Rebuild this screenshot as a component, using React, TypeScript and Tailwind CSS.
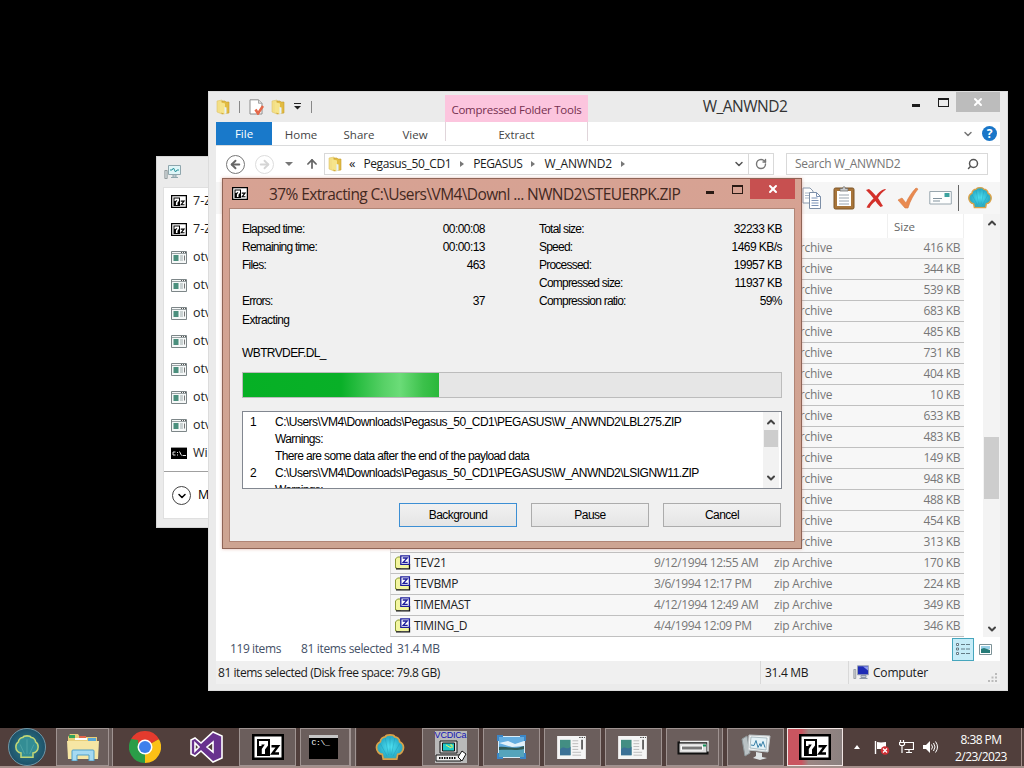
import React from 'react';
import { ArrowLeft, ArrowRight, ArrowUp, ChevronDown, ChevronUp, RotateCw, Search, X } from 'lucide-react';

interface FileRow {
  name?: string;
  date?: string;
  size: string;
}

const files: FileRow[] = [
  { size: '416 KB' },
  { size: '344 KB' },
  { size: '539 KB' },
  { size: '683 KB' },
  { size: '485 KB' },
  { size: '731 KB' },
  { size: '404 KB' },
  { size: '10 KB' },
  { size: '633 KB' },
  { size: '483 KB' },
  { size: '149 KB' },
  { size: '948 KB' },
  { size: '488 KB' },
  { size: '454 KB' },
  { size: '313 KB' },
  { name: 'TEV21', date: '9/12/1994 12:55 AM', size: '170 KB' },
  { name: 'TEVBMP', date: '3/6/1994 12:17 PM', size: '224 KB' },
  { name: 'TIMEMAST', date: '4/12/1994 12:49 AM', size: '349 KB' },
  { name: 'TIMING_D', date: '4/4/1994 12:09 PM', size: '346 KB' },
];

const processes = ['7-Zip', '7-Zip', 'otvdm', 'otvdm', 'otvdm', 'otvdm', 'otvdm', 'otvdm', 'otvdm', 'Windows'];

/* ---------- Icons ---------- */

const SevenZipIcon = ({ className }: { className: string }) => (
  <svg className={className} viewBox="0 0 32 26">
    <path d="M0 0h32v26H0z" fill="#000" />
    <path d="M2.500 2.500h27v21h-27z" fill="#fff" />
    <path d="M5 5h13v17H5z" fill="#000" />
    <path d="M7 7h9v4.500l-3 4V20h-3.200v-5l3-4.500H9.500V12H7z" fill="#fff" />
    <path d="M19.500 12.200h6.500l-5.500 7.300h6.500" fill="none" stroke="#000" strokeWidth="2.400" />
  </svg>
);

const AppWindowIcon = () => (
  <svg className="h-[13px] w-4 shrink-0" viewBox="0 0 16 13">
    <path d="M.5.5h15v12H.5z" fill="#f6f8f8" stroke="#7d8688" />
    <path d="M1 2.500h14" stroke="#9aa3a5" />
    <path d="M10 1.500h1m1 0h1m1 0h1" stroke="#555" />
    <path d="M2.500 4h5v6h-5z" fill="#4b8f7d" />
    <path d="M9 5h3M9 7h3M9 9h3" stroke="#8c9a9a" strokeWidth=".8" />
    <path d="M13.500 4.500v5" stroke="#555" strokeWidth=".8" />
  </svg>
);

const ConsoleIcon = () => (
  <svg className="h-3 w-4 shrink-0" viewBox="0 0 16 12">
    <path d="M0 0h16v12H0z" fill="#000" />
    <path d="M0 .5h16" stroke="#999" />
    <path d="M4.500 5H2v3h2.500M6 5.500h1M6 8h1M8.500 4.500l2 4M11.500 8.500H15" stroke="#fff" fill="none" strokeWidth=".9" />
  </svg>
);

const FolderIcon = () => (
  <svg className="h-4 w-[15px] shrink-0" viewBox="0 0 15 16">
    <path d="M1 2l5-1v14l-5-2z" fill="#f3df86" stroke="#dfc468" strokeWidth=".6" />
    <path d="M6 2h3l1 1h3v11l-7 1z" fill="#e2bb42" stroke="#c79f30" strokeWidth=".6" />
    <path d="M4 3l5 1.500V15l-5-2z" fill="#f6e48b" />
    <path d="M8.500 8l2 .5v6l-2 .5z" fill="#e6f2fa" />
  </svg>
);

const PropertiesIcon = () => (
  <svg className="h-4 w-[15px]" viewBox="0 0 15 16">
    <path d="M1 .8h8.500L13 4.300V15H1z" fill="#fff" stroke="#8b8b8b" />
    <path d="M9.500.8v3.500H13" fill="#ddd" stroke="#8b8b8b" strokeWidth=".7" />
    <path d="M6.500 10.500l2.500 4 5-7.500" fill="none" stroke="#e5694a" strokeWidth="2.600" />
  </svg>
);

const ZipIcon = () => (
  <svg className="mb-0.5 h-[15px] w-[17px] shrink-0" viewBox="0 0 17 15">
    <path d="M1.500 13V4l2-2H7v11z" fill="#f3f6a0" stroke="#8a9a35" />
    <path d="M3 5h12v8H3z" fill="#f3f6a0" />
    <path d="M2 13.800h13.500V9" fill="none" stroke="#111" strokeWidth="1.300" />
    <path d="M6.800.8h8.600v8.600H6.800z" fill="#fff" stroke="#1d1d9c" strokeWidth="1.300" />
    <path d="M8.700 3h4.500l-4 4.300h4.500" fill="none" stroke="#1d1d9c" strokeWidth="1.300" />
  </svg>
);

const MonitorIcon = () => (
  <svg className="h-4 w-[17px]" viewBox="0 0 17 16">
    <path d="M4.500 1.500h12v9h-12z" fill="#dff6f8" stroke="#8fa6ad" />
    <path d="M6 6h2l1.500-2 2 4 1.500-2h2" fill="none" stroke="#26939b" />
    <path d="M9 11h3v2H9zM7 13.500h7" stroke="#8fa6ad" fill="none" />
    <path d="M.8 6.500h2.400v8H.8z" fill="#cfd6d8" stroke="#7b8588" strokeWidth=".7" />
  </svg>
);

const ShellIcon = ({ className }: { className: string }) => (
  <svg className={className} viewBox="0 0 30 28">
    <defs>
      <radialGradient id="shell" cx=".5" cy=".5" r=".6">
        <stop offset="0" stopColor="#4fe3f3" />
        <stop offset=".65" stopColor="#2bb0cb" />
        <stop offset="1" stopColor="#5d9a86" />
      </radialGradient>
    </defs>
    <path
      d="M8 26l-1-5c-3 0-6-3-6-7 0-3 2-5 4-6 0-3 3-5 5-5 1-2 3-2 5-2s4 0 5 2c2 0 5 2 5 5 2 1 4 3 4 6 0 4-3 7-6 7l-1 5z"
      fill="url(#shell)"
      stroke="#d9a24a"
      strokeWidth="1.800"
    />
    <path d="M12 23L5 10M13.500 22L10 4M15 22V3M16.500 22L20 4M18 23l7-13" stroke="#1787a0" fill="none" strokeWidth=".7" opacity=".45" />
  </svg>
);

const CopyIcon = () => (
  <svg className="h-[22px] w-5" viewBox="0 0 20 22">
    <path d="M1 1h7l3 3v12H1z" fill="#fff" stroke="#8898ad" />
    <path d="M3 6h4M3 8.500h4M3 11h4" stroke="#a9b6c8" />
    <path d="M7.500 5.500h7l4 4v12h-11z" fill="#fff" stroke="#7d8fa7" />
    <path d="M14.500 5.500v4h4M9.500 11h6M9.500 13.500h7M9.500 16h7M9.500 18.500h7" stroke="#7d93b5" fill="none" />
  </svg>
);

const PasteIcon = () => (
  <svg className="h-6 w-[22px]" viewBox="0 0 22 24">
    <rect x="1" y="2" width="20" height="21" rx="1.500" fill="#a8753a" stroke="#7c5427" />
    <path d="M4 5h14v15H4z" fill="#fff" />
    <path d="M6 9h10M6 12h10M6 15h10M6 18h10" stroke="#9aa4ae" />
    <path d="M7 5V2.500h2.500C10 0 12 0 12.500 2.500H15V5z" fill="#c7c9cb" stroke="#666" strokeWidth=".7" />
  </svg>
);

const DeleteIcon = () => (
  <svg className="h-[21px] w-[22px]" viewBox="0 0 22 21">
    <path d="M1 2l3-1c3 2 5 5 7 7 2-3 5-6 9-7l1 .5c-4 2.500-6 5.500-8 8.500 2 3 3 5 5 8l-2.500 1c-2-2-4-4-5-6-3 2-5 5-6 7l-3-.5c2-4 4-6 7-9-2-3-4-5-7.500-8.500z" fill="#d3302a" />
  </svg>
);

const CheckMarkIcon = () => (
  <svg className="h-[22px] w-[22px]" viewBox="0 0 22 22">
    <path d="M1 13l4-2 4 5c2-5 6-11 10-15l2 1c-4 5-8 12-10 19H8z" fill="#e98a50" stroke="#d87940" strokeWidth=".6" />
  </svg>
);

const CardIcon = () => (
  <svg className="h-4 w-[23px]" viewBox="0 0 23 16">
    <path d="M.8 1.500h21.500v12.500H.8z" fill="#fdfefe" stroke="#98a6ae" />
    <path d="M15.500 3h5v4h-5z" fill="#3ba29f" />
    <path d="M4 8.500h9M4 11h7" stroke="#81929d" />
  </svg>
);

const ComputerIcon = () => (
  <svg className="h-[15px] w-4" viewBox="0 0 16 15">
    <path d="M4.500.8h11v9h-11z" fill="#1d2bb5" stroke="#9ba3b5" />
    <path d="M10 1.500h5v4z" fill="#8e9aed" />
    <path d="M8 10.500h5v2H8zM6.500 13.500h8" stroke="#8d97a8" fill="#c6ccd6" />
    <path d="M.8 4.500h2v9h-2z" fill="#c9cdd1" stroke="#868c93" strokeWidth=".7" />
  </svg>
);

/* ---------- Task manager, mostly behind the explorer window ---------- */

const TaskManager = () => (
  <div className="absolute left-[156px] top-[156px] flex h-[372px] w-[120px] flex-col overflow-hidden border border-[#d6d6d6] bg-[#ebebeb] pb-2 pl-1.5">
    <div className="flex h-[30px] items-center pl-px">
      <MonitorIcon />
    </div>
    <div className="flex flex-1 flex-col border border-[#e0e0e0] bg-white">
      <div className="h-[284px] border-b border-[#a0a0a0] text-[12.500px] text-[#1e1e1e]">
        {processes.map((name, i) => (
          <div key={i} className="flex h-7 items-center gap-1.5 pb-0.5 pl-[7px]">
            {name === '7-Zip' ? <SevenZipIcon className="h-[13px] w-4 shrink-0" /> : name === 'Windows' ? <ConsoleIcon /> : <AppWindowIcon />}
            {name}
          </div>
        ))}
      </div>
      <div className="flex flex-1 items-center gap-[7px] pl-2 pt-px text-[12.500px]">
        <span className="flex size-[19px] items-center justify-center rounded-full border border-[#444]">
          <ChevronDown className="size-3" strokeWidth={3} />
        </span>
        More
      </div>
    </div>
  </div>
);

/* ---------- Explorer ---------- */

const WindowButtons = ({ active }: { active?: boolean }) => (
  <div className="flex items-start">
    <span className={`ml-px mt-3 h-[3px] w-2 ${active ? 'bg-[#2a1a14]' : 'bg-[#1c1c1c]'}`} />
    <span className={`ml-[18px] mt-1.5 h-[9px] w-[11px] border border-t-2 ${active ? 'border-[#2a1a14]' : 'border-[#1c1c1c]'}`} />
    <span className={`ml-[7px] flex h-5 w-[45px] items-center justify-center text-white ${active ? 'bg-[#c75050]' : 'bg-[#bcbcbc]'}`}>
      <X className="size-3" strokeWidth={4} />
    </span>
  </div>
);

const Crumb = ({ className, children }: { className: string; children: string }) => (
  <>
    <span className={className}>{children}</span>
    <span className="mx-[9px] border-y-[3px] border-l-4 border-y-transparent border-l-[#777]" />
  </>
);

const Explorer = () => (
  <div className="absolute left-[208px] top-[91px] flex h-[600px] w-[800px] flex-col border border-[#dcdcdc] bg-[#ebebeb] px-[7px] pb-[7px] text-[12px]">
    {/* Title bar */}
    <div className="flex h-[30px] shrink-0">
      <div className="flex w-[229px] items-center pb-px">
        <FolderIcon />
        <span className="ml-2 h-3 w-px bg-[#888]" />
        <span className="ml-[9px]"><PropertiesIcon /></span>
        <span className="ml-[7px]"><FolderIcon /></span>
        <svg className="ml-2 h-[7px] w-[7px]" viewBox="0 0 7 7">
          <path d="M0 .5h7" stroke="#222" />
          <path d="M0 3h7L3.500 6.500z" fill="#222" />
        </svg>
        <span className="ml-2.5 h-3 w-px bg-[#888]" />
      </div>
      <div className="mt-[3px] flex w-[143px] items-center justify-center whitespace-nowrap bg-[#fcc5de] pt-0.5 text-[11.500px] tracking-[-0.250px] text-[#75304f]">
        Compressed Folder Tools
      </div>
      <div className="flex-1 pr-[9px] pt-[3px] text-center text-[15.500px] leading-[22px] tracking-[-0.500px] text-[#333]">
        W_ANWND2
      </div>
      <div className="w-[89px] shrink-0">
        <WindowButtons />
      </div>
    </div>
    {/* Ribbon tabs */}
    <div className="flex h-6 shrink-0 items-stretch border-b border-[#dadbdc] bg-white text-[11.500px] text-[#444]">
      <div className="flex w-14 items-center justify-center bg-[#1979ca] text-white">File</div>
      <div className="flex w-[58px] items-center justify-center pt-0.5">Home</div>
      <div className="flex w-[58px] items-center justify-center pt-0.5">Share</div>
      <div className="flex w-[54px] items-center justify-center pt-0.5">View</div>
      <div className="mb-1 ml-[3px] flex w-[143px] items-end justify-center border-x border-[#e0d5da] text-[11.200px] leading-[13px]">Extract</div>
      <div className="flex flex-1 items-center justify-end gap-2 pr-[3px]">
        <ChevronDown className="size-3 text-[#777]" strokeWidth={3} />
        <span className="flex size-[15px] items-center justify-center rounded-full bg-[#1976c8] text-[12px] font-bold text-white">?</span>
      </div>
    </div>
    {/* Address bar */}
    <div className="flex h-9 shrink-0 items-center bg-white pl-[10px]">
      <span className="flex size-[19px] items-center justify-center rounded-full border-[1.500px] border-[#777] text-[#666]">
        <ArrowLeft className="size-[13px]" strokeWidth={3.500} />
      </span>
      <span className="ml-2.5 flex size-[19px] items-center justify-center rounded-full border-[1.500px] border-[#ddd] text-[#d5d5d5]">
        <ArrowRight className="size-[13px]" strokeWidth={3.500} />
      </span>
      <span className="ml-[11px] border-x-4 border-t-4 border-x-transparent border-t-[#777]" />
      <ArrowUp className="ml-3 size-[14px] text-[#666]" strokeWidth={3} />
      <div className="ml-[5px] flex h-[22px] w-[450px] items-center border border-[#d9d9d9] pl-[3px] text-[12px] text-[#1a1a1a]">
        <FolderIcon />
        <span className="ml-1.5 mr-[8px] text-[13px]">«</span>
        <Crumb className="tracking-[-0.400px]">Pegasus_50_CD1</Crumb>
        <Crumb className="tracking-[-0.400px]">PEGASUS</Crumb>
        <Crumb className="tracking-[-0.150px]">W_ANWND2</Crumb>
        <div className="ml-auto flex h-full items-center">
          <ChevronDown className="mr-[3px] size-3 text-[#555]" strokeWidth={3} />
          <span className="flex h-full w-[25px] items-center justify-center border-l border-[#d9d9d9]">
            <RotateCw className="size-3 text-[#777]" strokeWidth={2.800} />
          </span>
        </div>
      </div>
      <div className="ml-3 flex h-[22px] w-[202px] items-center justify-between border border-[#d9d9d9] px-2 text-[12px] tracking-[-0.300px] text-[#767676]">
        Search W_ANWND2
        <Search className="size-3 -scale-x-100 text-[#555]" strokeWidth={3} />
      </div>
    </div>
    {/* Toolbar */}
    <div className="flex h-8 shrink-0 items-center bg-[#f6f6f6] pl-[586px]">
      <CopyIcon />
      <span className="ml-[11px]"><PasteIcon /></span>
      <span className="ml-[10px]"><DeleteIcon /></span>
      <span className="ml-[10px]"><CheckMarkIcon /></span>
      <span className="ml-[10px]"><CardIcon /></span>
      <span className="ml-[6px] h-[26px] w-px bg-[#666]" />
      <span className="ml-[9px]"><ShellIcon className="h-6 w-6" /></span>
    </div>
    {/* Folder pane and file list */}
    <div className="flex h-[423px] shrink-0 bg-white">
      <div className="w-[174px] shrink-0" />
      <div className="w-[574px]">
        <div className="flex h-6 items-center text-[11.500px] text-[#666]">
          <span className="ml-[497px] h-full border-l border-[#f0f0f0] pl-[6px] leading-[25px]">Size</span>
          <span className="ml-auto h-full border-l border-[#f0f0f0]" />
        </div>
        {files.map((file, i) => (
          <div key={i} className="flex h-[21px] items-center border-b border-l border-[#c0c0c0] border-l-[#dcdcdc] bg-[#f7f7f7] pr-1 text-[12px] text-[#777]">
            <div className="flex w-[263px] items-center gap-[3px] pl-[3px] tracking-[-0.350px] text-[#222]">
              {file.name && <ZipIcon />}
              {file.name}
            </div>
            <span className="w-[120px] whitespace-nowrap tracking-[-0.420px]">{file.date}</span>
            <span className="tracking-[-0.200px]">zip Archive</span>
            <span className="ml-auto tracking-[-0.400px]">{file.size}</span>
          </div>
        ))}
      </div>
      <div className="ml-auto flex w-[17px] flex-col items-center bg-[#f3f3f3] pb-0.5 pt-[3px] text-[#444]">
        <ChevronUp className="size-3" strokeWidth={4} />
        <span className="mt-[208px] h-[62px] w-[15px] bg-[#cdcdcd]" />
        <ChevronDown className="mt-auto size-3" strokeWidth={4} />
      </div>
    </div>
    {/* Details line */}
    <div className="flex h-6 shrink-0 items-center bg-white pl-3.5 pr-2 text-[12px] tracking-[-0.400px] text-[#445066]">
      <span className="w-[71px]">119 items</span>
      <span className="w-24 tracking-[-0.350px]">81 items selected</span>
      <span>31.4 MB</span>
      <span className="ml-auto flex h-[23px] w-[22px] items-center justify-center border border-[#46a6bd] bg-[#c6ecf8]">
        <svg className="h-3.5 w-4" viewBox="0 0 16 14">
          <path d="M1.500 1.500h2v2h-2zM1.500 6h2v2h-2zM1.500 10.500h2v2h-2z" fill="#fff" stroke="#637b86" />
          <path d="M6 2.500h4m1 0h4M6 7h4m1 0h4M6 11.500h4m1 0h4" stroke="#637b86" />
        </svg>
      </span>
      <svg className="ml-[5px] h-[11px] w-[13px]" viewBox="0 0 13 11">
        <path d="M.5.5h12v10H.5z" fill="#fff" stroke="#7c9297" />
        <path d="M2 2h9v3H2z" fill="#9bd1e8" />
        <path d="M2 5l3-1 6 2v3H2z" fill="#267b78" />
      </svg>
    </div>
    {/* Status bar */}
    <div className="flex h-[23px] shrink-0 items-center bg-[#f0f0f0] pl-0.5 text-[12px] tracking-[-0.300px] text-[#1a1a1a]">
      <span className="w-[542px] tracking-[-0.450px]">81 items selected (Disk free space: 79.8 GB)</span>
      <span className="flex h-full w-[88px] items-center border-l border-[#d9d9d9] pl-1">31.4 MB</span>
      <div className="relative flex h-full flex-1 items-center gap-1 border-l border-[#d9d9d9] pl-1 tracking-[-0.200px]">
        <ComputerIcon />
        Computer
        <svg className="absolute bottom-0.5 right-[3px] size-[9px]" viewBox="0 0 9 9">
          <path d="M7 0h2v2H7zM3.500 3.500h2v2h-2zM7 3.500h2v2H7zM0 7h2v2H0zM3.500 7h2v2h-2zM7 7h2v2H7z" fill="#bbb" />
        </svg>
      </div>
    </div>
  </div>
);

/* ---------- 7-Zip progress dialog ---------- */

const leftStats = [
  ['Elapsed time:', '00:00:08'],
  ['Remaining time:', '00:00:13'],
  ['Files:', '463'],
  ['', ''],
  ['Errors:', '37'],
];

const rightStats = [
  ['Total size:', '32233 KB'],
  ['Speed:', '1469 KB/s'],
  ['Processed:', '19957 KB'],
  ['Compressed size:', '11937 KB'],
  ['Compression ratio:', '59%'],
];

const messages = [
  ['1', 'C:\\Users\\VM4\\Downloads\\Pegasus_50_CD1\\PEGASUS\\W_ANWND2\\LBL275.ZIP'],
  ['', 'Warnings:'],
  ['', 'There are some data after the end of the payload data'],
  ['2', 'C:\\Users\\VM4\\Downloads\\Pegasus_50_CD1\\PEGASUS\\W_ANWND2\\LSIGNW11.ZIP'],
  ['', 'Warnings:'],
];

const Stats = ({ rows, className }: { rows: string[][]; className: string }) => (
  <div className={className}>
    {rows.map(([label, value], i) => (
      <div key={i} className="flex h-[18px] items-center justify-between">
        <span className="tracking-[-0.780px]">{label}</span>
        <span className="tracking-[-0.550px]">{value}</span>
      </div>
    ))}
  </div>
);

const ProgressDialog = () => (
  <div className="absolute left-[222px] top-[178px] flex h-[371px] w-[580px] flex-col border border-[#8f6456] bg-linear-to-b from-[#d7a293] to-[#cda492] px-1.5 pb-1.5 shadow-[0_0_3px_rgba(200,120,100,0.5)]">
    <div className="flex h-[29px] shrink-0">
      <SevenZipIcon className="ml-[3px] mt-2 h-[13px] w-4" />
      <div className="ml-[21px] flex-1 whitespace-pre pt-1 text-[15.500px] leading-[22px] tracking-[-0.600px] text-[#43281f]">
        37% Extracting C:\Users\VM4\Downl ... NWND2\STEUERPK.ZIP
      </div>
      <div className="w-[90px] shrink-0">
        <WindowButtons active />
      </div>
    </div>
    <div className="flex flex-1 flex-col border border-[#b08576] bg-[#f0f0f0] px-3 pt-[11px] font-['Liberation_Sans'] text-[12px] tracking-[-0.600px] text-black">
      <div className="flex">
        <Stats rows={leftStats} className="w-[243px]" />
        <Stats rows={rightStats} className="ml-[54px] w-[243px]" />
      </div>
      <div className="mt-px leading-[18px]">Extracting</div>
      <div className="mt-[15px] leading-[18px]">WBTRVDEF.DL_</div>
      <div className="mt-[10px] h-[26px] w-[540px] shrink-0 border border-[#bcbcbc] bg-[#e6e6e6]">
        <div className="h-full w-[196px] bg-[linear-gradient(90deg,#06b025_0%,#09b028_50%,#58d167_72%,#6bdc78_80%,#3cc14b_92%,#2ab83a_100%)]" />
      </div>
      <div className="mt-[13px] flex h-[78px] w-[540px] shrink-0 border border-[#828790] bg-white">
        <div className="flex-1 overflow-hidden pt-px">
          {messages.map(([num, text], i) => (
            <div key={i} className="flex h-[17px] items-center whitespace-nowrap">
              <span className="w-8 pl-[7px]">{num}</span>
              <span className={num ? 'tracking-[-0.510px]' : 'tracking-[-0.630px]'}>{text}</span>
            </div>
          ))}
        </div>
        <div className="mr-0.5 flex w-4 flex-col items-center bg-[#f2f2f2] py-1 text-[#444]">
          <ChevronUp className="size-3" strokeWidth={4} />
          <span className="mt-0.5 h-[17px] w-[14px] bg-[#cdcdcd]" />
          <ChevronDown className="mt-auto size-3" strokeWidth={4} />
        </div>
      </div>
      <div className="mt-[14px] flex justify-end gap-[14px] pr-px">
        {['Background', 'Pause', 'Cancel'].map((label, i) => (
          <button
            key={label}
            className={`h-6 w-[118px] border bg-linear-to-b from-[#f1f1f1] to-[#e5e5e5] tracking-[-0.550px] ${i === 0 ? 'border-[#3c8fd4]' : 'border-[#acacac]'}`}
          >
            {label}
          </button>
        ))}
      </div>
    </div>
  </div>
);

/* ---------- Taskbar ---------- */

const TaskButton = ({ className = '', children }: { className?: string; children: React.ReactNode }) => (
  <div className={`flex h-full items-center justify-center border border-[#9f9391] bg-[#6b5e5c] ${className}`}>{children}</div>
);

const DocumentIcon = () => (
  <svg className="mr-[3px] h-[23px] w-[29px]" viewBox="0 0 30 24">
    <path d="M0 0h30v24H0z" fill="#f5f5f5" />
    <path d="M23 1.500h1.500m1 0H27m1 0h1" stroke="#333" />
    <path d="M3 4h11v16H3z" fill="#438e83" />
    <path d="M3 14c4-5 7 2 11-3v9H3z" fill="#3b7196" />
    <path d="M16 5h6M16 8h6M16 11h6M16 14h6M16 17h9M16 20h9" stroke="#bbb" />
    <path d="M26 4v10" stroke="#333" strokeWidth="1.500" />
  </svg>
);

const Taskbar = () => (
  <div className="absolute bottom-0 left-0 flex h-10 w-full items-stretch border-b-2 border-[#a58f8b] bg-[#513f3c]">
    <div className="flex w-14 items-center pl-2">
      <span className="flex size-[38px] items-center justify-center rounded-full border border-[#6f98a8] bg-[radial-gradient(circle,#2f7f8e_0%,#1d5068_75%)]">
        <svg className="h-6 w-7" viewBox="0 0 30 28">
          <path d="M8 26v-5c-3 0-6-3-6-7 0-3 1-5 3-6 0-3 3-5 5-5 1-2 3-2 5-2s4 0 5 2c2 0 5 2 5 5 2 1 3 3 3 6 0 4-3 7-6 7v5z" fill="#338d94" stroke="#c1d676" strokeWidth="1.800" />
          <path d="M12 22L7 11M15 22V5M18 22l5-11" stroke="#5fb0ae" fill="none" strokeWidth=".7" />
        </svg>
      </span>
    </div>
    <TaskButton className="w-[53px]">
      <svg className="h-7 w-8" viewBox="0 0 32 28">
        <path d="M1 4l2-3h8l2 3h17v22H1z" fill="#e8ce79" />
        <path d="M2 2h6v3H2z" fill="#35a45b" />
        <path d="M12 3h7v3h-7z" fill="#e2664a" />
        <path d="M21 5h8v3h-8z" fill="#59a8d8" />
        <path d="M8 5h12v2H8z" fill="#fff" />
        <path d="M0 8h32l-1 18H1z" fill="#f6e6a4" />
        <path d="M5 28V18q0-1 1-1h20q1 0 1 1v10h-5v-6H10v6z" fill="#a5daf2" stroke="#4e9fc9" />
      </svg>
    </TaskButton>
    <div className="w-1 border-r border-[#9f9391] bg-[#6b5e5c]" />
    <div className="flex w-16 items-center justify-center">
      <svg className="h-8 w-8" viewBox="0 0 32 32">
        <path d="M16 16L2.140 8A16 16 0 0 1 29.860 8z" fill="#e33b2e" />
        <path d="M16 16L29.860 8A16 16 0 0 1 16 32z" fill="#fbc116" />
        <path d="M16 16v16A16 16 0 0 1 2.140 8z" fill="#2b9d48" />
        <path d="M16 8.500h13.900L29.860 8H16z" fill="#e33b2e" />
        <path d="M9.500 19.700L2.140 8 9 9z" fill="#2b9d48" />
        <circle cx="16" cy="16" r="7.500" fill="#fff" />
        <circle cx="16" cy="16" r="6" fill="#3d7fec" />
      </svg>
    </div>
    <div className="flex w-[62px] items-center justify-center pr-1">
      <svg className="h-8 w-[33px]" viewBox="0 0 33 32">
        <path d="M23 1l9 4v22l-9 4-12-11-6 5-4-2V9l4-2 6 5zM23 11l-6 5 6 5zM5 12v8l4-4z" fill="#68328e" stroke="#fff" strokeWidth="1.600" fillRule="evenodd" />
      </svg>
    </div>
    <TaskButton className="w-[57px]"><SevenZipIcon className="h-[26px] w-8" /></TaskButton>
    <TaskButton className="ml-1 w-[50px]">
      <div className="mr-1 h-6 w-[29px] border-t-[3px] border-[#c6c6c6] bg-black pl-[3px] font-['Liberation_Mono'] text-[8px] leading-[10px] tracking-[-0.300px] text-white">C:\_</div>
    </TaskButton>
    <div className="mr-px w-1.5 border-x border-[#9f9391] bg-[#6b5e5c]" />
    <div className="flex w-[65px] items-center justify-center bg-[#4a3531]">
      <ShellIcon className="h-[27px] w-[30px]" />
    </div>
    <TaskButton className="w-[57px]">
      <div className="flex h-8 w-8 flex-col items-center bg-[#b9b9b9]">
        <span className="font-['Liberation_Sans'] text-[9px] leading-[9px] tracking-[-0.200px] text-[#1313b5]">VCDICa</span>
        <svg className="h-[23px] w-8" viewBox="0 0 32 23">
          <path d="M5 1h17v12H5z" fill="#ddd" stroke="#111" />
          <path d="M7.500 3h12v8h-12z" fill="#21c9ca" stroke="#111" />
          <path d="M11 5l5 3M15 5h2v3" stroke="#f2f354" fill="none" />
          <path d="M1 15h25v6H1z" fill="#eee" stroke="#111" />
          <path d="M4 18h17" stroke="#111" strokeDasharray="1.500 1" strokeWidth="2" />
          <path d="M23 17l4-6 4 3-4 7z" fill="#fff" stroke="#111" />
        </svg>
      </div>
    </TaskButton>
    <TaskButton className="ml-1 w-[57px]">
      <svg className="h-6 w-[29px]" viewBox="0 0 29 24">
        <path d="M1.500 1.500h26v21h-26z" fill="#63ade0" stroke="#d9edf8" />
        <path d="M2 8l9-2 7 3 9-3v5l-12 1z" fill="#e2f1fa" />
        <path d="M2 12c7-1 15 3 25-1v4H2z" fill="#315a55" />
        <path d="M2 15c8-1 17 1 25-1v8H2z" fill="#55a4bb" />
        <path d="M1 6V1h5M23 1h5v5M28 18v5h-5M6 23H1v-5" fill="none" stroke="#3b86c6" strokeWidth="2" />
      </svg>
    </TaskButton>
    <TaskButton className="ml-1 w-[57px]"><DocumentIcon /></TaskButton>
    <TaskButton className="ml-1 w-[57px]"><DocumentIcon /></TaskButton>
    <TaskButton className="ml-1 w-[53px]">
      <svg className="h-[15px] w-8" viewBox="0 0 32 15">
        <path d="M1.500 2.500h29v11h-29z" fill="#ddd" stroke="#111" strokeWidth="2" />
        <path d="M3 1.500h28v10" fill="none" stroke="#eee" strokeWidth="1.500" />
        <path d="M4.500 6h21v4h-21z" fill="#777" stroke="#fff" />
        <path d="M26 5.500h3" stroke="#159359" strokeWidth="2" />
      </svg>
    </TaskButton>
    <div className="mr-1 w-1 border-r border-[#9f9391] bg-[#6b5e5c]" />
    <TaskButton className="w-[57px]">
      <svg className="h-7 w-[30px]" viewBox="0 0 30 28">
        <path d="M1 6l5-3 3 17-5 3z" fill="#b9c1c4" stroke="#8e979a" />
        <path d="M8 2l21 1-2 16-20-2z" fill="#f0f3f4" stroke="#bcc4c7" />
        <path d="M10 4l16 1-1 12-16-2z" fill="#e4f2f7" stroke="#92a7b0" strokeWidth=".7" />
        <path d="M10 12l3 .5 2-5 2 7 2-4 1 3 2-5 2 6" stroke="#367fa8" fill="none" />
        <path d="M15 19l6 1v4l5 1-7 2-7-2 3-2z" fill="#dfe4e6" />
      </svg>
    </TaskButton>
    <div className="ml-[3px] flex w-[56px] items-center justify-center border border-[#f1e5e3] bg-[linear-gradient(90deg,#c95560_0%,#c95560_25%,#9b8683_38%,#8b8180_100%)]">
      <SevenZipIcon className="h-[26px] w-8" />
    </div>
    {/* Tray */}
    <div className="flex flex-1 items-center pl-[11px] text-white">
      <span className="border-x-[3.500px] border-b-4 border-x-transparent border-b-white" />
      <svg className="ml-[14px] h-[15px] w-4" viewBox="0 0 16 15">
        <path d="M1.500 1v13" stroke="#fff" strokeWidth="1.400" />
        <path d="M3 2l4 .5 5-.5v7H3z" fill="#fff" />
        <circle cx="11" cy="10.500" r="4.300" fill="#d02f35" />
        <path d="M9 8.500l4 4m0-4l-4 4" stroke="#fff" strokeWidth="1.300" />
      </svg>
      <svg className="ml-[9px] h-[14px] w-[15px]" viewBox="0 0 15 14">
        <path d="M5.500 2.500h9v7h-9M7 12.500h6M10 10v2M1.500 0v2.500m3-2.500v2.500M.5 2.500h5v2l-1 1h-3l-1-1zM3 6v7" fill="none" stroke="#fff" strokeWidth="1.200" />
      </svg>
      <svg className="ml-[9px] h-[14px] w-[15px]" viewBox="0 0 15 14">
        <path d="M0 5h3l4-4v12L3 9H0z" fill="#fff" />
        <path d="M8.500 4.500q2 2.500 0 5M10.500 3q3 4 0 8M12.500 1.500q4 5.500 0 11" fill="none" stroke="#fff" />
      </svg>
      <div className="ml-[13px] w-[60px] whitespace-nowrap pt-0.5 text-center text-[12px] leading-[17px] tracking-[-0.550px]">
        <div>8:38 PM</div>
        <div>2/23/2023</div>
      </div>
    </div>
    <div className="mr-0.5 w-px bg-[#a58f8b]" />
  </div>
);

const App: React.FC = () => (
  <div className="relative h-[768px] w-[1024px] overflow-hidden bg-black font-['Open_Sans','Noto_Sans',sans-serif]">
    <TaskManager />
    <Explorer />
    <ProgressDialog />
    <Taskbar />
  </div>
);

export default App;
